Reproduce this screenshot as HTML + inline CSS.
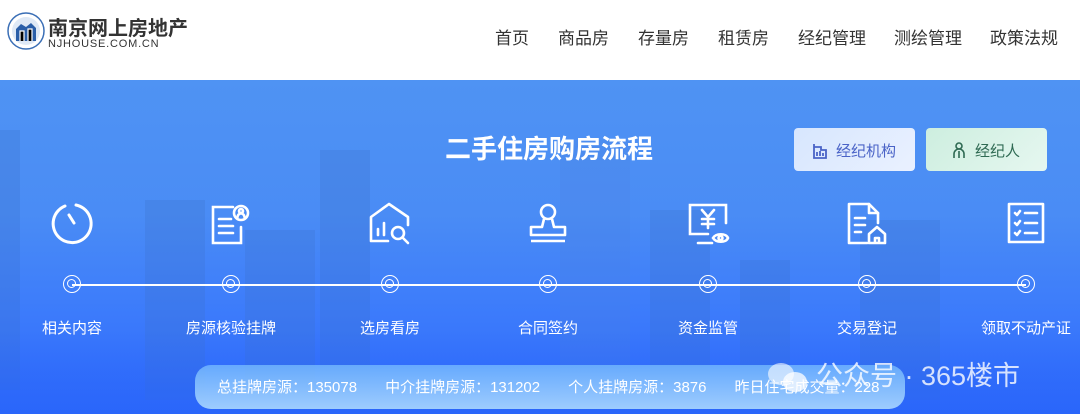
<!DOCTYPE html>
<html><head><meta charset="utf-8"><style>
*{margin:0;padding:0;box-sizing:border-box}
body{width:1080px;height:414px;overflow:hidden;font-family:"Liberation Sans","Noto Sans CJK SC",sans-serif;background:#fff;position:relative}
.hdr{height:80px;background:#fff;position:relative}
.nav{position:absolute;top:24px;font-size:17px;color:#333}
.ban{position:absolute;top:80px;left:0;width:1080px;height:334px;background:linear-gradient(180deg,#4f93f3 0%,#4a8cf5 40%,#3c7bfb 70%,#2e69fb 100%);overflow:hidden}
.bld{position:absolute;background:rgba(60,110,200,.25)}
.t{position:absolute;color:#fff;font-size:15px;transform:translateX(-50%);white-space:nowrap}
.c{position:absolute;width:18px;height:18px;border:1.5px solid #fff;border-radius:50%;transform:translate(-50%,-50%)}
.c::after{content:"";position:absolute;left:3px;top:3px;width:9px;height:9px;border:1.2px solid #fff;border-radius:50%;box-sizing:border-box}
svg.i{position:absolute;transform:translate(-50%,-50%)}
</style></head><body>
<div class="hdr">
<svg style="position:absolute;left:6px;top:11px" width="40" height="40" viewBox="0 0 40 40"><circle cx="20" cy="20" r="18" fill="none" stroke="#3b6fb6" stroke-width="1.5"/><circle cx="20" cy="20" r="14" fill="#dfe9f6"/><path d="M10 30V18l5-5 5 3 5-4 5 5v13z" fill="#2a5ea8"/><path d="M14 30V20h4v10M22 30V18h4v12" stroke="#fff" stroke-width="1.2"/></svg>
<div style="position:absolute;left:48px;top:12px;font-size:20px;font-weight:bold;color:#333">南京网上房地产</div>
<div style="position:absolute;left:48px;top:38px;font-size:11px;color:#333;letter-spacing:.8px">NJHOUSE.COM.CN</div>
<div class="nav" style="left:495px">首页</div>
<div class="nav" style="left:558px">商品房</div>
<div class="nav" style="left:638px">存量房</div>
<div class="nav" style="left:718px">租赁房</div>
<div class="nav" style="left:798px">经纪管理</div>
<div class="nav" style="left:894px">测绘管理</div>
<div class="nav" style="left:990px">政策法规</div>
</div>
<div class="ban">
<div class="bld" style="left:0;top:50px;width:20px;height:260px"></div>
<div class="bld" style="left:145px;top:120px;width:60px;height:200px"></div>
<div class="bld" style="left:320px;top:70px;width:50px;height:250px"></div>
<div class="bld" style="left:245px;top:150px;width:70px;height:170px"></div>
<div class="bld" style="left:560px;top:60px;width:70px;height:260px;background:rgba(80,130,220,.2)"></div>
<div class="bld" style="left:650px;top:130px;width:60px;height:190px"></div>
<div class="bld" style="left:740px;top:180px;width:50px;height:140px"></div>
<div class="bld" style="left:860px;top:140px;width:80px;height:180px"></div>
<div style="position:absolute;left:0;top:250px;width:1080px;height:84px;background:linear-gradient(180deg,rgba(40,100,250,0),rgba(40,100,250,.6))"></div>
<div style="position:absolute;left:445px;top:49px;font-size:26px;font-weight:bold;color:#fff">二手住房购房流程</div>
<div style="position:absolute;left:794px;top:48px;width:121px;height:43px;border-radius:4px;background:linear-gradient(135deg,#d7e6fe,#eaf1ff);"></div>
<svg style="position:absolute;left:813px;top:63px" width="14" height="16" viewBox="0 0 14 16"><path d="M1 1v14h12V7H8V4H1M4 13V9M7 13V8M10 13v-3" fill="none" stroke="#4a63c7" stroke-width="1.8"/></svg>
<div style="position:absolute;left:836px;top:60px;font-size:15px;color:#4a63c7">经纪机构</div>
<div style="position:absolute;left:926px;top:48px;width:121px;height:43px;border-radius:4px;background:linear-gradient(135deg,#cdeedf,#e6f7f0)"></div>
<svg style="position:absolute;left:952px;top:62px" width="14" height="17" viewBox="0 0 14 17"><circle cx="7" cy="4" r="3" fill="none" stroke="#2f6a53" stroke-width="1.6"/><path d="M2 16v-4a5 5 0 0 1 10 0v4M7 9v7" fill="none" stroke="#2f6a53" stroke-width="1.6"/></svg>
<div style="position:absolute;left:975px;top:60px;font-size:15px;color:#2f6a53">经纪人</div>
<div style="position:absolute;left:72px;top:204px;width:954px;height:1.5px;background:#fff"></div>
<svg class="i" style="left:72px;top:143px" width="44" height="44" viewBox="0 0 44 44" fill="none" stroke="#fff" stroke-width="3" stroke-linecap="round"><path d="M15 5A19 19 0 1 0 26 4"/><path d="M19 14l5 8"/></svg>
<svg class="i" style="left:231px;top:143px" width="44" height="44" viewBox="0 0 44 44" fill="none" stroke="#fff" stroke-width="2.6" stroke-linecap="round"><path d="M24 6H4v36h28V26"/><path d="M10 18h12M10 25h14M10 32h14"/><circle cx="32" cy="12" r="7"/><circle cx="32" cy="10" r="2"/><path d="M28.5 16a3.5 3.5 0 0 1 7 0"/></svg>
<svg class="i" style="left:390px;top:143px" width="44" height="44" viewBox="0 0 44 44" fill="none" stroke="#fff" stroke-width="2.6" stroke-linecap="round" stroke-linejoin="round"><path d="M20 40H3V16L21 3l19 13v8"/><path d="M10 34V28M16 34V22"/><circle cx="30" cy="32" r="6"/><path d="M35 37l5 5"/></svg>
<svg class="i" style="left:548px;top:143px" width="44" height="44" viewBox="0 0 44 44" fill="none" stroke="#fff" stroke-width="2.6" stroke-linejoin="round"><circle cx="22" cy="11" r="7"/><path d="M18 18l-2 8H5v8h34v-8H28l-2-8M5 40h34"/></svg>
<svg class="i" style="left:708px;top:143px" width="44" height="44" viewBox="0 0 44 44" fill="none" stroke="#fff" stroke-width="2.6" stroke-linecap="round"><path d="M22 33H4V4h36v18M12 42h14"/><path d="M16 9l6 7 6-7M22 16v11M16 18h12M16 23h12"/><path d="M27 37c3-5 13-5 15 0-2 5-12 5-15 0z"/><circle cx="34.5" cy="37" r="2"/></svg>
<svg class="i" style="left:867px;top:143px" width="44" height="44" viewBox="0 0 44 44" fill="none" stroke="#fff" stroke-width="2.6" stroke-linecap="round" stroke-linejoin="round"><path d="M22 42H4V3h20l9 9v10"/><path d="M24 3v9h9M10 17h10M10 24h10M10 31h6"/><path d="M24 42V33l8-7 8 7v9zM30 42v-5h4v5"/></svg>
<svg class="i" style="left:1026px;top:143px" width="44" height="44" viewBox="0 0 44 44" fill="none" stroke="#fff" stroke-width="2.6" stroke-linecap="round" stroke-linejoin="round"><path d="M5 3h34v38H5z"/><path d="M11 12l2 2 3-4M11 22l2 2 3-4M11 32l2 2 3-4M21 12h12M21 22h12M21 32h12"/></svg>
<div class="c" style="left:72px;top:204px"></div><div class="c" style="left:231px;top:204px"></div><div class="c" style="left:390px;top:204px"></div><div class="c" style="left:548px;top:204px"></div><div class="c" style="left:708px;top:204px"></div><div class="c" style="left:867px;top:204px"></div><div class="c" style="left:1026px;top:204px"></div>
<div class="t" style="left:72px;top:237px">相关内容</div>
<div class="t" style="left:231px;top:237px">房源核验挂牌</div>
<div class="t" style="left:390px;top:237px">选房看房</div>
<div class="t" style="left:548px;top:237px">合同签约</div>
<div class="t" style="left:708px;top:237px">资金监管</div>
<div class="t" style="left:867px;top:237px">交易登记</div>
<div class="t" style="left:1026px;top:237px">领取不动产证</div>
<div style="position:absolute;left:195px;top:285px;width:710px;height:44px;border-radius:16px;background:linear-gradient(180deg,rgba(120,190,255,.75),rgba(170,215,255,.9))"></div>
<div style="position:absolute;left:217px;top:296px;font-size:15px;color:#fff;white-space:nowrap">总挂牌房源：135078<span style="margin-left:28px">中介挂牌房源：131202</span><span style="margin-left:28px">个人挂牌房源：3876</span><span style="margin-left:28px">昨日住宅成交量：228</span></div>
<svg style="position:absolute;left:765px;top:280px" width="48" height="38" viewBox="0 0 48 38"><ellipse cx="16" cy="14" rx="13" ry="11" fill="rgba(255,255,255,.6)"/><ellipse cx="30" cy="22" rx="12" ry="10" fill="rgba(255,255,255,.75)"/></svg>
<div style="position:absolute;left:816px;top:274px;font-size:27px;color:rgba(255,255,255,.8);white-space:nowrap">公众号 · 365楼市</div>
</div>
</body></html>
